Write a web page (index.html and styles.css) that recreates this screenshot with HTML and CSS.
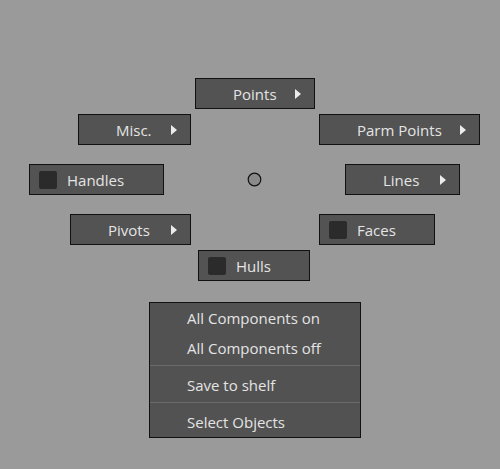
FILE: index.html
```html
<!DOCTYPE html>
<html>
<head>
<meta charset="utf-8">
<link rel="stylesheet" href="styles.css">
</head>
<body>
<div class="radial">
  <div class="btn points">Points<svg class="arrow" width="6" height="10" viewBox="0 0 6 10"><polygon points="0,0 6,5 0,10"/></svg></div>
  <div class="btn misc">Misc.<svg class="arrow" width="6" height="10" viewBox="0 0 6 10"><polygon points="0,0 6,5 0,10"/></svg></div>
  <div class="btn parm">Parm Points<svg class="arrow" width="6" height="10" viewBox="0 0 6 10"><polygon points="0,0 6,5 0,10"/></svg></div>
  <div class="btn check handles"><span class="box"></span>Handles</div>
  <svg class="center" width="15" height="15" viewBox="0 0 15 15"><circle cx="7.5" cy="7.5" r="6.3"/></svg>
  <div class="btn lines">Lines<svg class="arrow" width="6" height="10" viewBox="0 0 6 10"><polygon points="0,0 6,5 0,10"/></svg></div>
  <div class="btn pivots">Pivots<svg class="arrow" width="6" height="10" viewBox="0 0 6 10"><polygon points="0,0 6,5 0,10"/></svg></div>
  <div class="btn check faces"><span class="box"></span>Faces</div>
  <div class="btn check hulls"><span class="box"></span>Hulls</div>
</div>
<div class="menu">
  <div class="item">All Components on</div>
  <div class="item">All Components off</div>
  <div class="sep"></div>
  <div class="item">Save to shelf</div>
  <div class="sep"></div>
  <div class="item">Select Objects</div>
</div>
</body>
</html>
```
FILE: styles.css
```css
html, body {
  margin: 0;
  padding: 0;
  background: #9a9a9a;
  font-family: "Open Sans", "Noto Sans", sans-serif;
  font-size: 15px;
  color: #e4e4e4;
}
.radial {
  position: relative;
  height: 302px;
}
.btn {
  position: absolute;
  box-sizing: border-box;
  height: 31px;
  border: 1px solid #111;
  background: #535353;
  display: flex;
  align-items: center;
  padding-left: 37px;
  padding-right: 13px;
  white-space: nowrap;
}
.btn.check {
  padding-left: 9px;
}
.points { left: 195px; top: 78px; width: 120px; }
.misc { left: 78px; top: 114px; width: 113px; }
.parm { left: 319px; top: 114px; width: 161px; }
.handles { left: 29px; top: 164px; width: 135px; }
.lines { left: 345px; top: 164px; width: 115px; }
.pivots { left: 70px; top: 214px; width: 121px; }
.faces { left: 319px; top: 214px; width: 116px; }
.hulls { left: 198px; top: 250px; width: 112px; }
.box {
  width: 18px;
  height: 18px;
  border-radius: 2px;
  background: #2b2b2b;
  margin-right: 10px;
  flex: none;
}
.arrow {
  margin-left: auto;
  fill: #ececec;
  flex: none;
}
.center {
  position: absolute;
  left: 247px;
  top: 172px;
  fill: #8a8a8a;
  stroke: #111;
  stroke-width: 1.2;
}
.menu {
  margin-left: 149px;
  width: 212px;
  box-sizing: border-box;
  border: 1px solid #111;
  background: #525252;
}
.item {
  height: 30px;
  line-height: 30px;
  padding-left: 37px;
  white-space: nowrap;
}
.sep {
  height: 1px;
  background: #6b6b6b;
  margin: 2px 0 4px;
}
```
